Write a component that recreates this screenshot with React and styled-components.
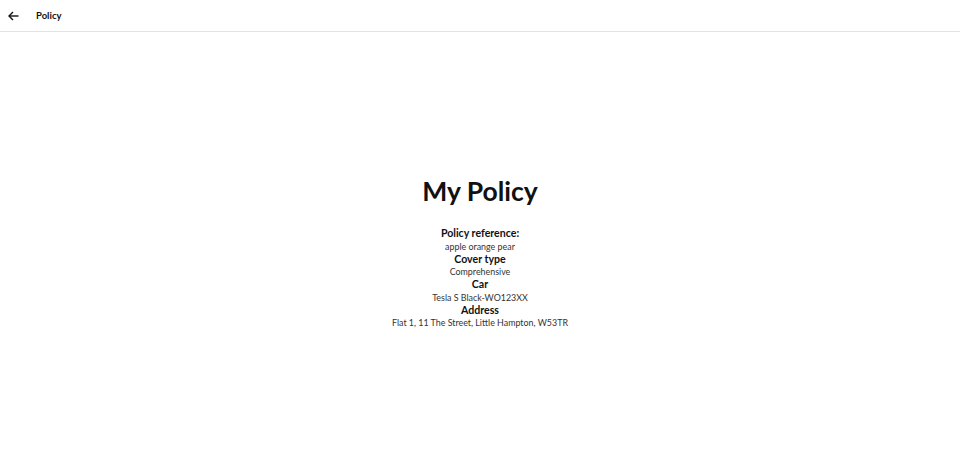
import React from 'react'
import styled, { createGlobalStyle } from 'styled-components'

const GlobalStyle = createGlobalStyle`
  html, body {
    margin: 0;
    padding: 0;
    background: #ffffff;
    font-family: Lato, "Open Sans", sans-serif;
    color: #111111;
  }
`

const Page = styled.div`
  display: flex;
  flex-direction: column;
  height: 100vh;
`

const Header = styled.header`
  display: flex;
  align-items: center;
  height: 31px;
  padding: 0 0 0 7px;
  border-bottom: 1px solid #e3e3e3;
  flex-shrink: 0;
`

const BackButton = styled.button`
  display: flex;
  align-items: center;
  justify-content: center;
  width: 12px;
  height: 12px;
  padding: 0;
  margin-right: 17px;
  border: none;
  background: none;
  color: #111111;
  cursor: pointer;
`

const Title = styled.span`
  font-size: 9.5px;
  font-weight: 700;
`

const Main = styled.main`
  flex: 1;
  display: flex;
  flex-direction: column;
  align-items: center;
  justify-content: center;
  text-align: center;
  padding-top: 2px;
`

const Heading = styled.h1`
  margin: 0 0 18px;
  font-size: 26.5px;
  font-weight: 700;
  line-height: 36px;
  color: #111111;
`

const Label = styled.div`
  font-size: 10.6px;
  font-weight: 700;
  line-height: 13.5px;
  color: #111111;
`

const Value = styled.div`
  font-size: 8.9px;
  line-height: 12px;
  color: #333333;
`

const fields = [
  ['Policy reference:', 'apple orange pear'],
  ['Cover type', 'Comprehensive'],
  ['Car', 'Tesla S Black-WO123XX'],
  ['Address', 'Flat 1, 11 The Street, Little Hampton, W53TR'],
]

const App = () => {
  return (
    <Page>
      <GlobalStyle />
      <Header>
        <BackButton aria-label="Back">
          <svg width="11" height="10" viewBox="0 0 11 10" fill="none" stroke="currentColor" strokeWidth="1.4">
            <path d="M10.5 5H1.2" />
            <path d="M5 1L1 5l4 4" />
          </svg>
        </BackButton>
        <Title>Policy</Title>
      </Header>
      <Main>
        <Heading>My Policy</Heading>
        {fields.map(([label, value]) => (
          <React.Fragment key={label}>
            <Label>{label}</Label>
            <Value>{value}</Value>
          </React.Fragment>
        ))}
      </Main>
    </Page>
  )
}

export default App
